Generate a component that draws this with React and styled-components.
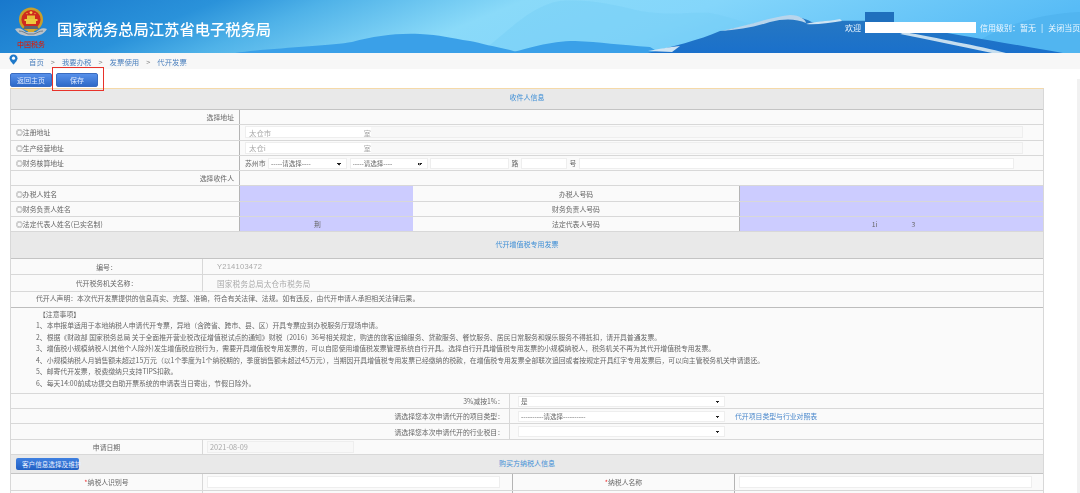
import React from "react";
import styled, { createGlobalStyle } from "styled-components";

const colors = {
  line: "#d8d8d8",
  hardLine: "#b4b4b4",
  band: "#e9e9e9",
  cell: "#fafafa",
  purple: "#ccccff",
  link: "#3f8fd6",
  text: "#666",
};

const notes = [
  "1、本申报单适用于本地纳税人申请代开专票，异地（含跨省、跨市、县、区）开具专票应到办税服务厅现场申请。",
  "2、根据《财政部 国家税务总局 关于全面推开营业税改征增值税试点的通知》财税〔2016〕36号相关规定，购进的旅客运输服务、贷款服务、餐饮服务、居民日常服务和娱乐服务不得抵扣，请开具普通发票。",
  "3、增值税小规模纳税人(其他个人除外)发生增值税应税行为，需要开具增值税专用发票的，可以自愿使用增值税发票管理系统自行开具。选择自行开具增值税专用发票的小规模纳税人，税务机关不再为其代开增值税专用发票。",
  "4、小规模纳税人月销售额未超过15万元（以1个季度为1个纳税期的，季度销售额未超过45万元），当期因开具增值税专用发票已经缴纳的税款，在增值税专用发票全部联次追回或者按规定开具红字专用发票后，可以向主管税务机关申请退还。",
  "5、邮寄代开发票，税费缴纳只支持TIPS扣款。",
  "6、每天14:00前成功提交自助开票系统的申请表当日寄出，节假日除外。",
];

const Emblem = () => (
  <svg width="34" height="30" viewBox="0 0 34 30">
    <path d="M1 22 C6 20 9 23 12 25 L22 25 C25 23 28 20 33 22 C30 27 25 29 20 29 L14 29 C9 29 4 27 1 22Z" fill="#b9c2c9" />
    <path d="M5 24 C9 24 11 26 14 27 L20 27 C23 26 25 24 29 24" fill="none" stroke="#6f7d88" strokeWidth="1" />
    <circle cx="17" cy="12.5" r="12" fill="#c99f2a" />
    <circle cx="17" cy="12.5" r="9.6" fill="#cf2a1e" />
    <path d="M10.5 12 h13 v2 h-13z M12 14 h10 v3 h-10z" fill="#edc93f" />
    <path d="M13 8.5 h8 v3.5 h-8z" fill="#e8bf38" />
    <circle cx="17" cy="5.6" r="1.4" fill="#f4d54a" />
    <circle cx="13" cy="6.6" r="0.6" fill="#f4d54a" />
    <circle cx="21" cy="6.6" r="0.6" fill="#f4d54a" />
    <path d="M11 19 h12 l2 3 h-16z" fill="#5b6670" />
    <path d="M13 22 h8 l-1 3 h-6z" fill="#d9a92e" />
  </svg>
);

const Landscape = () => (
  <Scenery viewBox="0 0 1080 53" preserveAspectRatio="none">
    <defs>
      <linearGradient id="sky" x1="0" y1="0" x2="1" y2="0.12">
        <stop offset="0" stopColor="#1878cc" />
        <stop offset="0.2" stopColor="#2a92da" />
        <stop offset="0.3" stopColor="#4fb2e8" />
        <stop offset="0.48" stopColor="#8adaf9" />
        <stop offset="0.66" stopColor="#84d6fb" />
        <stop offset="1" stopColor="#58bcf6" />
      </linearGradient>
      <linearGradient id="hill" x1="0" y1="0" x2="0" y2="1">
        <stop offset="0" stopColor="#2778c2" />
        <stop offset="1" stopColor="#1a70cb" />
      </linearGradient>
    </defs>
    <rect width="1080" height="53" fill="url(#sky)" />
    <path d="M480 53 C510 30 530 6 560 1 C590 -1 610 4 640 11 C670 16 690 12 710 13 C735 18 745 23 760 26 L720 53Z" fill="#74cdf4" opacity="0.4" />
    <path d="M960 53 C1000 24 1040 14 1080 12 L1080 53Z" fill="#4aaeea" opacity="0.5" />
    <path d="M235 53 C270 48 330 46 352 42 C375 36 395 33 420 34 C440 35 450 38 470 41 C480 43 495 47 510 50 L520 53Z" fill="#3aa0e8" />
    <path d="M510 53 C525 49 550 41 575 41 C600 42 620 45 650 47 L660 53Z" fill="#3aa0e8" />
    <path d="M648 53 C670 47 700 40 720 31 C745 28 760 20 790 16 C805 17 810 22 815 23 C830 20 850 21 880 21 C910 27 960 35 1063 53Z" fill="url(#hill)" />
    <path d="M648 51 C660 49 668 47 680 46 L672 52Z" fill="#cfe4f3" />
    <path d="M720 31 C745 27 765 18 790 15 C800 15 806 20 806 23 C797 19 785 18 770 22 C755 27 738 30 720 31Z" fill="#b8d5ec" />
    <path d="M806 24 C815 21 825 22 840 19 L842 21 C828 23 816 25 806 24Z" fill="#cfe4f3" />
    <path d="M905 32 C935 38 980 46 1006 53 L992 53 C960 46 930 40 900 34Z" fill="#c6deef" />
    <rect x="865" y="12" width="29" height="12" fill="#1f6fbd" />
  </Scenery>
);

const App = () => (
  <>
    <GlobalStyle />
    <Page>
      <Header>
        <Landscape />
        <Brand>
          <Crest>
            <Emblem />
            <CrestText>中国税务</CrestText>
          </Crest>
          <Title>国家税务总局江苏省电子税务局</Title>
        </Brand>
        <UserBar>
          <span>欢迎</span>
          <Redacted />
          <span>信用级别：暂无</span>
          <Sep>|</Sep>
          <span>关闭当页</span>
        </UserBar>
      </Header>

      <Crumbs>
        <svg width="9" height="11" viewBox="0 0 9 11">
          <path d="M4.5 0.5 C2 0.5 0.5 2.3 0.5 4.2 C0.5 6.8 4.5 10.5 4.5 10.5 C4.5 10.5 8.5 6.8 8.5 4.2 C8.5 2.3 7 0.5 4.5 0.5Z" fill="#1f79c9" />
          <circle cx="4.5" cy="4.2" r="1.6" fill="#fff" />
        </svg>
        <CrumbLink>首页</CrumbLink>
        <CrumbArrow>&gt;</CrumbArrow>
        <CrumbLink>我要办税</CrumbLink>
        <CrumbArrow>&gt;</CrumbArrow>
        <CrumbLink>发票使用</CrumbLink>
        <CrumbArrow>&gt;</CrumbArrow>
        <CrumbLink>代开发票</CrumbLink>
      </Crumbs>

      <Toolbar>
        <BlueButton>返回主页</BlueButton>
        <SaveWrap>
          <BlueButton>保存</BlueButton>
        </SaveWrap>
      </Toolbar>

      <Form>
        <Band $h={21} $lift={4}>收件人信息</Band>

        <Row $cols="228px 1fr">
          <Label $align="right">选择地址</Label>
          <Cell $line />
        </Row>
        <Row $cols="228px 1fr">
          <Label>◎注册地址</Label>
          <Cell $line>
            <LockedField>
              <Masked>太仓市<i>室</i></Masked>
            </LockedField>
          </Cell>
        </Row>
        <Row $cols="228px 1fr">
          <Label>◎生产经营地址</Label>
          <Cell $line>
            <LockedField>
              <Masked>太仓i<i>室</i></Masked>
            </LockedField>
          </Cell>
        </Row>
        <Row $cols="228px 1fr">
          <Label>◎财务核算地址</Label>
          <AddressCell $line>
            <span>苏州市</span>
            <Pick $w={79} defaultValue="a">
              <option value="a">-----请选择----</option>
            </Pick>
            <Pick $w={78} defaultValue="a">
              <option value="a">-----请选择----</option>
            </Pick>
            <TextBox $w={79} />
            <span>路</span>
            <TextBox $w={46} />
            <span>号</span>
            <TextBox $w={435} />
          </AddressCell>
        </Row>
        <Row $cols="228px 1fr">
          <Label $align="right">选择收件人</Label>
          <Cell $line />
        </Row>
        <Row $cols="228px 174px 326px 1fr">
          <Label>◎办税人姓名</Label>
          <Purple />
          <Label $align="center">办税人号码</Label>
          <Purple />
        </Row>
        <Row $cols="228px 174px 326px 1fr">
          <Label>◎财务负责人姓名</Label>
          <Purple />
          <Label $align="center">财务负责人号码</Label>
          <Purple />
        </Row>
        <Row $cols="228px 174px 326px 1fr">
          <Label>◎法定代表人姓名(已实名制)</Label>
          <Purple>
            <NameMask>荆</NameMask>
          </Purple>
          <Label $align="center">法定代表人号码</Label>
          <Purple>
            <IdMask>1i<i>3</i></IdMask>
          </Purple>
        </Row>

        <Band $h={26.5} $lift={2}>代开增值税专用发票</Band>

        <Row $cols="191px 1fr" $h={16.5}>
          <Label $align="center">编号：</Label>
          <Value $soft>Y214103472</Value>
        </Row>
        <Row $cols="191px 1fr" $h={16.5}>
          <Label $align="center">代开税务机关名称：</Label>
          <Value $soft>国家税务总局太仓市税务局</Value>
        </Row>
        <Declaration>代开人声明：本次代开发票提供的信息真实、完整、准确，符合有关法律、法规。如有违反，由代开申请人承担相关法律后果。</Declaration>
        <Notes>
          <NoteTitle>【注意事项】</NoteTitle>
          {notes.map((line) => (
            <div key={line}>{line}</div>
          ))}
        </Notes>

        <Row $cols="498px 1fr">
          <Label $align="right">3%减按1%：</Label>
          <ChoiceCell $soft>
            <Pick $w={207} defaultValue="a">
              <option value="a">是</option>
            </Pick>
          </ChoiceCell>
        </Row>
        <Row $cols="498px 1fr">
          <Label $align="right">请选择您本次申请代开的项目类型：</Label>
          <ChoiceCell $soft>
            <Pick $w={207} defaultValue="a">
              <option value="a">----------请选择----------</option>
            </Pick>
            <TableLink>代开项目类型与行业对照表</TableLink>
          </ChoiceCell>
        </Row>
        <Row $cols="498px 1fr">
          <Label $align="right">请选择您本次申请代开的行业税目：</Label>
          <ChoiceCell $soft>
            <Pick $w={207} defaultValue="a">
              <option value="a"></option>
            </Pick>
          </ChoiceCell>
        </Row>
        <Row $cols="191px 1fr">
          <Label $align="center">申请日期</Label>
          <DateCell $soft>
            <DateField>2021-08-09</DateField>
          </DateCell>
        </Row>

        <BuyerBand>
          <CustomerButton>客户信息选择及维护</CustomerButton>
          购买方纳税人信息
        </BuyerBand>

        <Row $cols="191px 310px 222px 1fr" $h={17}>
          <Label $align="center"><Req>*</Req>纳税人识别号</Label>
          <InputCell $soft><BuyerInput /></InputCell>
          <Label $align="center" $line><Req>*</Req>纳税人名称</Label>
          <InputCell $line><BuyerInput /></InputCell>
        </Row>
        <Row $cols="191px 310px 222px 1fr" $h={17}>
          <Label />
          <InputCell $soft><BuyerInput /></InputCell>
          <Label $line />
          <InputCell $line><BuyerInput /></InputCell>
        </Row>
      </Form>
      <Scrollbar />
    </Page>
  </>
);

const GlobalStyle = createGlobalStyle`
  html, body {
    margin: 0;
    padding: 0;
    height: 100%;
    overflow: hidden;
    background: #fff;
  }
  body {
    font-family: "Noto Sans CJK SC", "Liberation Sans", sans-serif;
    font-size: 6.85px;
    color: ${colors.text};
  }
`;

const Page = styled.div`
  position: relative;
  width: 1080px;
  height: 493px;
  overflow: hidden;
  filter: blur(0.3px);
`;

const Header = styled.header`
  position: relative;
  height: 53px;
`;

const Scenery = styled.svg`
  position: absolute;
  inset: 0;
  width: 100%;
  height: 100%;
`;

const Brand = styled.div`
  position: relative;
  display: flex;
  align-items: flex-start;
  padding: 7px 0 0 14px;
`;

const Crest = styled.div`
  display: flex;
  flex-direction: column;
  align-items: center;
  width: 34px;
  svg {
    display: block;
  }
`;

const CrestText = styled.div`
  margin-top: 3px;
  font-size: 7px;
  line-height: 9px;
  font-weight: 500;
  color: #c9261c;
  white-space: nowrap;
`;

const Title = styled.h1`
  margin: 10px 0 0 9px;
  font-size: 15.3px;
  line-height: 22px;
  font-weight: 500;
  color: #fff;
  white-space: nowrap;
`;

const UserBar = styled.div`
  position: absolute;
  top: 22px;
  left: 845px;
  display: flex;
  align-items: center;
  height: 11px;
  font-size: 8px;
  color: #eef8ff;
  white-space: nowrap;
`;

const Redacted = styled.div`
  width: 111px;
  height: 11px;
  margin: 0 4px;
  background: #fff;
`;

const Sep = styled.span`
  margin: 0 5px 0 5px;
`;

const Crumbs = styled.nav`
  display: flex;
  align-items: center;
  height: 16px;
  padding-left: 9px;
  background: #f7f7f7;
  font-size: 7.4px;
  svg {
    margin-right: 11px;
    margin-top: -3px;
  }
`;

const CrumbLink = styled.a`
  color: #4a7fbd;
`;

const CrumbArrow = styled.span`
  margin: 0 7px;
  color: #888;
`;

const Toolbar = styled.div`
  display: flex;
  height: 19px;
  padding: 4px 0 0 10px;
  box-sizing: border-box;
`;

const BlueButton = styled.button`
  width: 42px;
  height: 14px;
  padding: 0;
  border: 1px solid #3a6cc0;
  border-radius: 2px;
  background: linear-gradient(#5790ea, #2f6ac8);
  color: #dfeaff;
  font: inherit;
  font-size: 7px;
`;

const SaveWrap = styled.div`
  position: relative;
  margin-left: 4px;
  &::after {
    content: "";
    position: absolute;
    top: -6px;
    left: -4px;
    right: -6px;
    bottom: -3px;
    border: 1.5px solid #e8322a;
  }
`;

const Form = styled.main`
  width: 1034px;
  margin-left: 10px;
  border-top: 1.5px solid #f5d9a8;
  border-left: 1px solid ${colors.line};
  border-right: 1px solid ${colors.line};
  box-sizing: border-box;
  background: ${colors.cell};
`;

const Band = styled.div`
  display: flex;
  align-items: center;
  justify-content: center;
  height: ${({ $h }) => $h}px;
  padding-bottom: ${({ $lift }) => $lift || 0}px;
  box-sizing: border-box;
  border-bottom: 1px solid #c4c4c4;
  background: ${colors.band};
  color: ${colors.link};
  font-size: 7px;
`;

const BuyerBand = styled(Band).attrs({ $h: 18.5, $lift: 1 })`
  position: relative;
`;

const CustomerButton = styled.button`
  position: absolute;
  left: 5px;
  top: 3px;
  width: 63px;
  height: 12px;
  padding: 0;
  border: 0;
  border-radius: 2px;
  background: linear-gradient(#3f80e0, #2160c4);
  color: #e8f0ff;
  font: inherit;
  font-size: 6.6px;
  text-align: left;
  text-indent: 6px;
  white-space: nowrap;
`;

const Row = styled.div`
  display: grid;
  grid-template-columns: ${({ $cols }) => $cols};
  height: ${({ $h }) => $h || 15.3}px;
  box-sizing: border-box;
  border-bottom: 1.5px solid ${colors.line};
`;

const Cell = styled.div`
  min-width: 0;
  display: flex;
  align-items: center;
  border-left: ${({ $line, $soft }) =>
    $line ? `1px solid ${colors.hardLine}` : $soft ? `1px solid ${colors.line}` : "none"};
`;

const Label = styled(Cell)`
  padding: 0 5px;
  justify-content: ${({ $align }) =>
    $align === "right" ? "flex-end" : $align === "center" ? "center" : "flex-start"};
  white-space: nowrap;
`;

const Purple = styled(Cell)`
  justify-content: center;
  border-left: 1px solid ${colors.hardLine};
  background: ${colors.purple};
`;

const NameMask = styled.span`
  margin-right: 18px;
`;

const IdMask = styled.span`
  margin-left: 4px;
  i {
    margin-left: 34px;
    font-style: normal;
  }
`;

const LockedField = styled.div`
  width: 778px;
  height: 12px;
  margin-left: 5px;
  border: 1px solid #eee;
  box-sizing: border-box;
  background: #f8f8f8;
  display: flex;
  align-items: center;
  font-size: 7.4px;
  color: #aaa;
`;

const Masked = styled.div`
  width: 125px;
  height: 100%;
  padding-left: 3px;
  box-sizing: border-box;
  background: #fff;
  display: flex;
  align-items: center;
  white-space: nowrap;
  i {
    margin-left: auto;
    font-style: normal;
  }
`;

const AddressCell = styled(Cell)`
  gap: 2.5px;
  padding-left: 5px;
`;

const Pick = styled.select`
  appearance: none;
  width: ${({ $w }) => $w}px;
  height: 11px;
  padding: 0 0 0 2px;
  border: 1px solid #eee;
  background-color: #fff;
  background-image:
    linear-gradient(45deg, transparent 50%, #222 50%),
    linear-gradient(-45deg, transparent 50%, #222 50%);
  background-position: calc(100% - 7px) 4px, calc(100% - 4.5px) 4px;
  background-size: 2.5px 2.5px;
  background-repeat: no-repeat;
  color: #666;
  font: inherit;
  font-size: 6.5px;
  line-height: 9px;
`;

const TextBox = styled.div`
  width: ${({ $w }) => $w}px;
  height: 11px;
  border: 1px solid #eee;
  box-sizing: border-box;
  background: #fff;
`;

const Value = styled(Cell)`
  padding-left: 14px;
  font-family: "Liberation Sans", "Noto Sans CJK SC", sans-serif;
  font-size: 7.6px;
  letter-spacing: 0.2px;
  color: #aaa;
`;

const Declaration = styled.div`
  display: flex;
  align-items: center;
  height: 16px;
  padding-left: 25px;
  padding-bottom: 2px;
  box-sizing: border-box;
  border-bottom: 1px solid #bdbdbd;
  white-space: nowrap;
`;

const Notes = styled.section`
  height: 86px;
  padding: 1px 0 0 25px;
  box-sizing: border-box;
  border-bottom: 1.5px solid ${colors.line};
  line-height: 11.5px;
  white-space: nowrap;
`;

const NoteTitle = styled.div`
  padding-left: 3px;
`;

const ChoiceCell = styled(Cell)`
  padding-left: 8px;
`;

const TableLink = styled.a`
  margin-left: 10px;
  color: #4a88cc;
`;

const DateCell = styled(Cell)`
  padding-left: 4px;
`;

const DateField = styled.div`
  display: flex;
  align-items: center;
  width: 147px;
  height: 12px;
  padding-left: 2px;
  box-sizing: border-box;
  border: 1px solid #eee;
  background: #f8f8f8;
  color: #aaa;
  font-size: 7.4px;
`;

const InputCell = styled(Cell)`
  padding-left: 4px;
`;

const BuyerInput = styled.div`
  width: 293px;
  height: 12px;
  border: 1px solid #eee;
  box-sizing: border-box;
  background: #fff;
`;

const Req = styled.span`
  color: #e33;
`;

const Scrollbar = styled.div`
  position: absolute;
  top: 79px;
  right: 0;
  bottom: 0;
  width: 3px;
  background: #f1f1f1;
`;

export default App;
